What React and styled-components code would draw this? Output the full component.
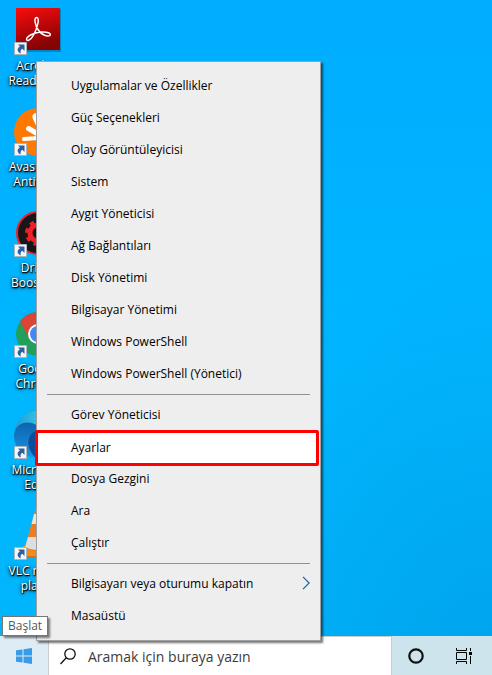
import React from "react";
import styled, { createGlobalStyle, css } from "styled-components";

const GlobalStyle = createGlobalStyle`
  * {
    box-sizing: border-box;
  }
  body {
    margin: 0;
    font-family: "Open Sans", "Noto Sans", sans-serif;
    font-size: 12px;
    color: #000;
  }
`;

const Screen = styled.div`
  position: relative;
  display: flex;
  flex-direction: column;
  min-height: 100vh;
  overflow: hidden;
  background:
    radial-gradient(ellipse at 100% 100%, rgba(0, 152, 228, 0.6), transparent 45%),
    linear-gradient(180deg, #00adff 0%, #00b7ff 55%, #00b5fb 100%);
`;

const Desktop = styled.main`
  flex: 1;
  padding-top: 5px;
`;

const Shortcuts = styled.ul`
  display: grid;
  grid-auto-rows: 101px;
  width: 76px;
  margin: 0;
  padding: 0;
  list-style: none;
`;

const Shortcut = styled.a`
  display: flex;
  flex-direction: column;
  align-items: center;
  gap: 5px;
  color: #fff;
  line-height: 15px;
  text-align: center;
  text-decoration: none;
  text-shadow: 1px 1px 1px #000, 0 1px 2px #000, 0 1px 4px rgba(0, 0, 0, 0.7);
`;

const ShortcutIcon = styled.svg`
  width: 48px;
  height: 48px;
  overflow: visible;
`;

const ShortcutLabel = styled.span`
  width: 68px;
`;

const Menu = styled.ul`
  position: absolute;
  left: 36px;
  bottom: 34px;
  width: 285px;
  margin: 0;
  padding: 8px 0;
  list-style: none;
  background: #eee;
  border: 1px solid #a0a0a0;
  box-shadow: 2px 2px 2px rgba(0, 0, 0, 0.55);
`;

const MenuRow = styled.li`
  display: flex;
  align-items: flex-start;
  height: 32px;
`;

const MenuItem = styled.button`
  display: flex;
  flex-shrink: 0;
  align-items: center;
  justify-content: space-between;
  width: 100%;
  height: 32px;
  padding: 0 10px 2px 34px;
  border: 0;
  background: transparent;
  font: inherit;
  color: inherit;
  text-align: left;

  ${(props) =>
    props.$selected &&
    css`
      width: calc(100% + 1px);
      height: 36px;
      margin: -1px 0 0 -2px;
      padding-left: 33px;
      border: 3px solid #f00;
      border-radius: 2px;
      background: #fff;
    `}
`;

const Separator = styled.li`
  height: 1px;
  margin: 4px 10px;
  background: #919191;
`;

const Chevron = styled.svg`
  width: 8px;
  height: 14px;
`;

const Tooltip = styled.div`
  position: absolute;
  left: 2px;
  bottom: 39px;
  padding: 1px 5px;
  border: 1px solid #767676;
  background: #fff;
  color: #575757;
  line-height: 16px;
  box-shadow: 2px 2px 2px rgba(0, 0, 0, 0.5);
`;

const Taskbar = styled.footer`
  display: flex;
  height: 39px;
  padding-right: 4px;
  background: #cde4ed;
`;

const TaskButton = styled.button`
  display: flex;
  align-items: center;
  justify-content: center;
  width: 48px;
  padding: 0;
  border: 0;
  background: ${(props) => (props.$active ? "#deedf5" : "transparent")};
`;

const SearchBox = styled.label`
  display: flex;
  flex: 1;
  align-items: center;
  gap: 12px;
  padding: 0 11px;
  border: 1px solid #c8cdd0;
  border-bottom: 0;
  background: #fff;
`;

const SearchInput = styled.input`
  flex: 1;
  min-width: 0;
  padding: 0;
  border: 0;
  outline: 0;
  background: transparent;
  font: inherit;
  font-size: 14px;

  &::placeholder {
    color: #3c3c3c;
    opacity: 1;
  }
`;

const Arrow = () => (
  <g>
    <path d="M.5 37.5h12v12H.5z" fill="#f5f6f8" stroke="#a9b4bd" />
    <path
      d="M4 39.500h6.500V46l-2.200-2.200c-1.600.9-2 2.400-1.600 4.700-4.200-2-3.700-5.600-.7-7z"
      fill="#2e5f9e"
    />
  </g>
);

const AcrobatIcon = () => (
  <ShortcutIcon viewBox="0 0 48 48" aria-hidden="true">
    <defs>
      <linearGradient id="acrobat" x1="0" y1="0" x2=".3" y2="1">
        <stop offset="0" stopColor="#fb0c0c" />
        <stop offset="1" stopColor="#850304" />
      </linearGradient>
    </defs>
    <path d="M3 4h44v43H3z" fill="#035b8c" opacity=".5" />
    <path d="M2 3h44v42H2z" fill="url(#acrobat)" />
    <path
      d="M22.800 12.500c-3.500 0-1.500 8 1.500 12.500 3 4.500 8.500 7 11.500 5.600 2.400-2-3-4.300-9.500-3.500-6.500.7-13.500 4-13.700 7-.2 2.600 3.700 1.800 6.700-3.600 3.500-6 7-17.800 3.500-18z"
      fill="none"
      stroke="#fff"
      strokeWidth="1.500"
    />
    <Arrow />
  </ShortcutIcon>
);

const AvastIcon = () => (
  <ShortcutIcon viewBox="0 0 48 48" aria-hidden="true">
    <circle cx="24" cy="26" r="24" fill="#ff7800" />
    <g fill="none" stroke="#fff" strokeLinecap="round">
      <path d="M22.500 11l6 13" strokeWidth="8" />
      <path d="M14.500 22.500l12 7" strokeWidth="5" />
      <path d="M10 33l14-1" strokeWidth="4" />
    </g>
    <Arrow />
  </ShortcutIcon>
);

const BoosterIcon = () => (
  <ShortcutIcon viewBox="0 0 48 48" aria-hidden="true">
    <circle cx="24" cy="26" r="21" fill="#171717" stroke="#ef2029" strokeWidth="2" />
    <circle cx="24" cy="26" r="8" fill="none" stroke="#ef2029" strokeWidth="5" />
    <circle
      cx="24"
      cy="26"
      r="11"
      fill="none"
      stroke="#ef2029"
      strokeWidth="4"
      strokeDasharray="4.320 4.320"
    />
    <Arrow />
  </ShortcutIcon>
);

const ChromeIcon = () => (
  <ShortcutIcon viewBox="0 0 48 48" aria-hidden="true">
    <circle cx="24" cy="26" r="22" fill="#22a05b" />
    <path d="M24 26L6 13.500A22 22 0 0 1 43.500 16H24z" fill="#db4437" />
    <path d="M24 16h19.500A22 22 0 0 1 24 48l9-17z" fill="#ffcd40" />
    <path d="M6 13.500L15 30l9-4V16z" fill="#db4437" />
    <circle cx="24" cy="26" r="10" fill="#fff" />
    <circle cx="24" cy="26" r="8" fill="#4587f3" />
    <Arrow />
  </ShortcutIcon>
);

const EdgeIcon = () => (
  <ShortcutIcon viewBox="0 0 48 48" aria-hidden="true">
    <defs>
      <linearGradient id="edge-top" x1="0" y1="0" x2="1" y2="0">
        <stop offset="0" stopColor="#1c9bdc" />
        <stop offset=".5" stopColor="#35c1dd" />
        <stop offset="1" stopColor="#61d95b" />
      </linearGradient>
      <linearGradient id="edge-body" x1="0" y1="0" x2="0" y2="1">
        <stop offset="0" stopColor="#0f62ae" />
        <stop offset="1" stopColor="#1b97e3" />
      </linearGradient>
    </defs>
    <path
      d="M0 25C1 11 11 2 24 2s24 9 24 20c0 8-9 12-16 9-2-8-8-12-16-12C8 18 3 20 0 25z"
      fill="url(#edge-top)"
    />
    <path
      d="M0 26c1-15 21-17 28-4-6 1-7 10-2 16 4 5 12 6 18 2-4 6-11 9-19 9C10 49 0 39 0 26z"
      fill="url(#edge-body)"
    />
    <path d="M22 22c-9 3-11 17 0 27 9 1 17-3 22-9-11 4-22-3-22-18z" fill="#0b4f9c" />
    <Arrow />
  </ShortcutIcon>
);

const VlcIcon = () => (
  <ShortcutIcon viewBox="0 0 48 48" aria-hidden="true">
    <path d="M9 36h30l5 12H5z" fill="#f68b16" />
    <path d="M21 0h6l10 38c-6 4-20 4-26 0z" fill="#ee7b1e" />
    <path d="M20 4h8l3 10H17.500z" fill="#e5e5e5" />
    <path d="M14 27h20l3 10c-7 4-19 4-26 0z" fill="#dedede" />
    <path d="M5 46h39v2H5z" fill="#e36c0b" />
    <Arrow />
  </ShortcutIcon>
);

const shortcuts = [
  { label: "Acrobat Reader DC", Icon: AcrobatIcon },
  { label: "Avast Free Antivirus", Icon: AvastIcon },
  { label: "Driver Booster 8", Icon: BoosterIcon },
  { label: "Google Chrome", Icon: ChromeIcon },
  { label: "Microsoft Edge", Icon: EdgeIcon },
  { label: "VLC media player", Icon: VlcIcon },
];

const menuGroups = [
  [
    "Uygulamalar ve Özellikler",
    "Güç Seçenekleri",
    "Olay Görüntüleyicisi",
    "Sistem",
    "Aygıt Yöneticisi",
    "Ağ Bağlantıları",
    "Disk Yönetimi",
    "Bilgisayar Yönetimi",
    "Windows PowerShell",
    "Windows PowerShell (Yönetici)",
  ],
  ["Görev Yöneticisi", "Ayarlar", "Dosya Gezgini", "Ara", "Çalıştır"],
  ["Bilgisayarı veya oturumu kapatın", "Masaüstü"],
];

const selectedItem = "Ayarlar";
const submenuItem = "Bilgisayarı veya oturumu kapatın";

const App = () => {
  return (
    <Screen>
      <GlobalStyle />
      <Desktop>
        <Shortcuts>
          {shortcuts.map(({ label, Icon }) => (
            <li key={label}>
              <Shortcut href="#">
                <Icon />
                <ShortcutLabel>{label}</ShortcutLabel>
              </Shortcut>
            </li>
          ))}
        </Shortcuts>
      </Desktop>
      <Taskbar>
        <TaskButton $active aria-label="Başlat">
          <svg width="16" height="16" viewBox="0 0 16 16" fill="#3a9be8">
            <path d="M0 2.300l6.500-.9v6.100H0zM7.500 1.200L16 0v7.500H7.500zM0 8.500h6.500v6.100L0 13.700zM7.500 8.500H16V16l-8.500-1.200z" />
          </svg>
        </TaskButton>
        <SearchBox>
          <svg width="16" height="17" viewBox="0 0 16 17" fill="none" stroke="#111" strokeWidth="1.300">
            <circle cx="10" cy="6" r="5.200" />
            <path d="M6.300 9.800L.5 16" />
          </svg>
          <SearchInput type="text" placeholder="Aramak için buraya yazın" aria-label="Ara" />
        </SearchBox>
        <TaskButton aria-label="Cortana">
          <svg width="16" height="16" viewBox="0 0 16 16">
            <circle cx="8" cy="8" r="6.700" fill="none" stroke="#111" strokeWidth="2.200" />
          </svg>
        </TaskButton>
        <TaskButton aria-label="Görev görünümü">
          <svg width="16" height="16" viewBox="0 0 16 16" fill="none" stroke="#000">
            <path d="M.5 0v2.500h10V0M.5 4.500h10v7H.5zM.5 16v-2.500h10V16M14.500 0v3M14.500 8v8" />
            <path d="M13 4h3v3h-3z" fill="#000" stroke="none" />
          </svg>
        </TaskButton>
      </Taskbar>
      <Menu role="menu">
        {menuGroups.map((items, index) => (
          <React.Fragment key={items[0]}>
            {index > 0 && <Separator role="separator" />}
            {items.map((item) => (
              <MenuRow key={item} role="none">
                <MenuItem role="menuitem" $selected={item === selectedItem}>
                  {item}
                  {item === submenuItem && (
                    <Chevron viewBox="0 0 8 14" fill="none" stroke="#1c5f9c" strokeWidth="1.200">
                      <path d="M1 .8L7.200 7 1 13.200" />
                    </Chevron>
                  )}
                </MenuItem>
              </MenuRow>
            ))}
          </React.Fragment>
        ))}
      </Menu>
      <Tooltip role="tooltip">Başlat</Tooltip>
    </Screen>
  );
};

export default App;
